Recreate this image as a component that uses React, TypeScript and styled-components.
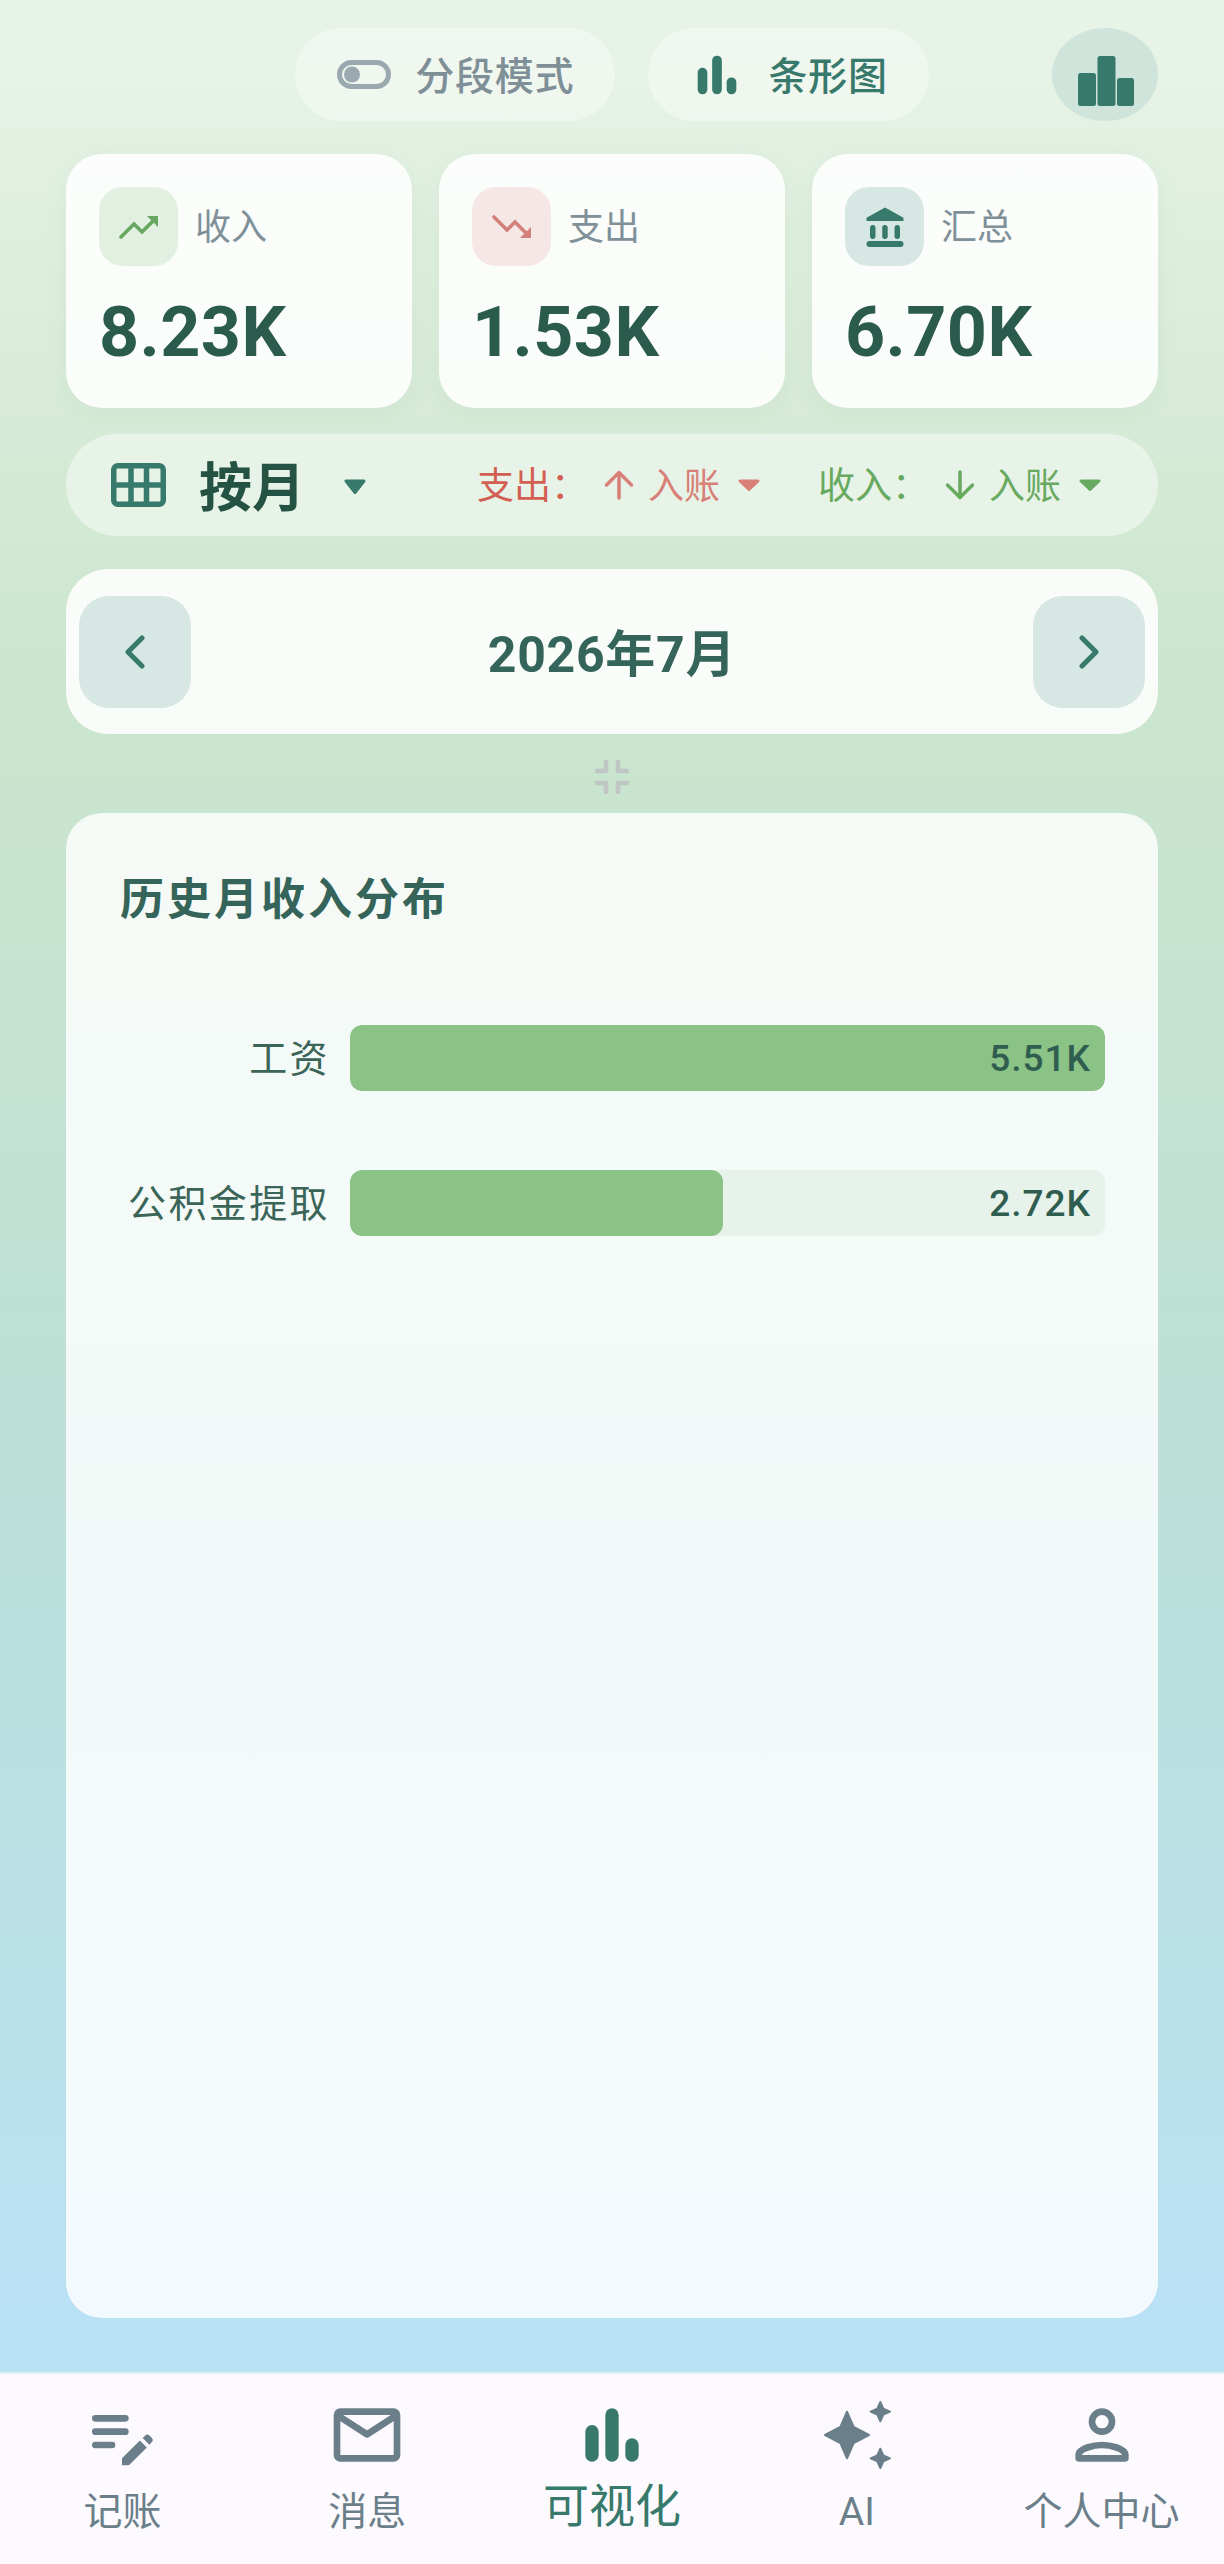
import React from 'react';
import styled, { createGlobalStyle } from 'styled-components';

const Global = createGlobalStyle`
  html, body { margin: 0; padding: 0; }
  body { font-family: Roboto, "Noto Sans CJK SC", sans-serif; }
  * { box-sizing: border-box; }
`;

const teal = '#37796b';
const slate = '#6b7f8a';

const Page = styled.div`
  width: 1224px;
  height: 2564px;
  display: flex;
  flex-direction: column;
  overflow: hidden;
  font-family: Roboto, "Noto Sans CJK SC", sans-serif;
`;
const Body = styled.main`
  flex: 1;
  min-height: 0;
  display: flex;
  flex-direction: column;
  padding: 28px 66px 54px;
  background: linear-gradient(180deg, #e9f4e9 0%, #cce6cd 28%, #bcdfd6 60%, #b9e1f6 100%);
`;
const TopBar = styled.div`
  display: grid;
  grid-template-columns: 1fr auto 1fr;
  align-items: center;
  margin-bottom: 33px;
`;
const PillGroup = styled.div`
  grid-column: 2;
  display: flex;
  gap: 33px;
`;
const Pill = styled.div<{ $gap: number; $left: number; $right: number }>`
  height: 93px;
  display: flex;
  align-items: center;
  gap: ${p => p.$gap}px;
  padding: 0 ${p => p.$right}px 0 ${p => p.$left}px;
  border-radius: 47px;
  background: rgba(255, 255, 255, 0.38);
`;
const PillLabel = styled.span<{ $color: string }>`
  font-size: 39px;
  font-weight: 500;
  letter-spacing: 0.8px;
  padding-bottom: 4px;
  color: ${p => p.$color};
  white-space: nowrap;
`;
const RoundButton = styled.div`
  grid-column: 3;
  justify-self: end;
  width: 106px;
  height: 93px;
  border-radius: 50%;
  display: flex;
  align-items: center;
  justify-content: center;
  padding: 13px 0 0 2px;
  background: #cfe4da;
`;
const Cards = styled.div`
  display: grid;
  grid-template-columns: repeat(3, 1fr);
  gap: 27px;
  margin-bottom: 26px;
`;
const StatCard = styled.div`
  height: 254px;
  padding: 33px;
  border-radius: 36px;
  background: rgba(255, 255, 255, 0.87);
  box-shadow: 0 4px 24px rgba(80, 140, 100, 0.07);
`;
const StatHead = styled.div`
  display: flex;
  align-items: center;
  gap: 17px;
  margin-bottom: 24px;
`;
const Tile = styled.div<{ $bg: string }>`
  width: 79px;
  height: 79px;
  border-radius: 24px;
  display: flex;
  align-items: center;
  justify-content: center;
  background: ${p => p.$bg};
`;
const StatLabel = styled.span`
  font-size: 36px;
  padding-bottom: 6px;
  color: #7f9098;
`;
const StatValue = styled.div`
  font-size: 70px;
  line-height: 84px;
  font-weight: 700;
  letter-spacing: 0.4px;
  color: #2a5b4d;
`;
const FilterBar = styled.div`
  height: 102px;
  display: flex;
  align-items: center;
  padding: 0 0 0 45px;
  border-radius: 51px;
  background: rgba(255, 255, 255, 0.45);
  margin-bottom: 33px;
`;
const ModeLabel = styled.span`
  flex: none;
  font-size: 53px;
  font-weight: 700;
  color: #245243;
  margin-left: 33px;
  padding-bottom: 2px;
  white-space: nowrap;
`;
const CaretBox = styled.span<{ $left: number; $top?: number }>`
  display: inline-flex;
  margin-left: ${p => p.$left}px;
  margin-top: ${p => p.$top ?? 0}px;
`;
const FilterGroup = styled.div<{ $left: number; $color: string }>`
  flex: none;
  display: flex;
  align-items: center;
  margin-left: ${p => p.$left}px;
  color: ${p => p.$color};
`;
const FilterName = styled.span`
  font-size: 37px;
  padding-bottom: 4px;
  white-space: nowrap;
`;
const FilterValue = styled.span<{ $color: string }>`
  font-size: 36px;
  color: ${p => p.$color};
  margin-left: 14px;
  padding-bottom: 5px;
  white-space: nowrap;
`;
const ArrowBox = styled.span`
  display: inline-flex;
  margin-left: 16px;
`;
const DateCard = styled.div`
  height: 165px;
  padding: 27px 13px;
  display: flex;
  align-items: center;
  justify-content: space-between;
  border-radius: 42px;
  background: rgba(255, 255, 255, 0.87);
  margin-bottom: 26px;
`;
const DateButton = styled.div`
  width: 112px;
  height: 112px;
  border-radius: 30px;
  display: flex;
  align-items: center;
  justify-content: center;
  background: #d7e7e3;
`;
const DateText = styled.span`
  font-size: 50px;
  font-weight: 700;
  letter-spacing: 0.7px;
  padding-bottom: 4px;
  color: #35655a;
`;
const Collapse = styled.div`
  height: 34px;
  display: flex;
  justify-content: center;
  margin-bottom: 19px;
`;
const ChartCard = styled.section`
  flex: 1;
  padding: 57px 53px 0 54px;
  border-radius: 36px;
  background: rgba(255, 255, 255, 0.82);
`;
const ChartTitle = styled.h2`
  margin: 0 0 95px;
  font-size: 44px;
  line-height: 60px;
  font-weight: 700;
  letter-spacing: 3px;
  color: #35655a;
`;
const BarRows = styled.div`
  display: flex;
  flex-direction: column;
  gap: 79px;
`;
const BarRow = styled.div`
  display: grid;
  grid-template-columns: 208px 1fr;
  column-gap: 22px;
  align-items: center;
`;
const BarLabel = styled.span`
  font-size: 38px;
  letter-spacing: 2.4px;
  text-align: right;
  margin-right: -2px;
  padding-bottom: 6px;
  color: #3a6558;
`;
const BarTrack = styled.div`
  position: relative;
  height: 66px;
  border-radius: 12px;
  overflow: hidden;
  display: flex;
  align-items: center;
  justify-content: flex-end;
  padding-right: 14px;
  background: #e7f2ea;
`;
const BarFill = styled.div`
  position: absolute;
  left: 0;
  top: 0;
  bottom: 0;
  border-radius: 12px;
  background: #8bc285;
`;
const BarValue = styled.span`
  position: relative;
  font-size: 37px;
  font-weight: 500;
  letter-spacing: 1px;
  color: #2f5e50;
`;
const BottomNav = styled.nav`
  height: 192px;
  flex: none;
  display: grid;
  grid-template-columns: repeat(5, 1fr);
  background: #fdfaff;
  border-top: 2px solid #e3eff5;
`;
const Tab = styled.div<{ $active?: boolean }>`
  display: flex;
  flex-direction: column;
  align-items: center;
  padding-top: 21px;
  color: ${p => (p.$active ? teal : slate)};
`;
const TabLabel = styled.span<{ $active?: boolean }>`
  font-size: ${p => (p.$active ? 46 : 39)}px;
  line-height: ${p => (p.$active ? 54 : 50)}px;
  margin-top: ${p => (p.$active ? 4 : 12)}px;
  white-space: nowrap;
`;

const Caret = ({ color, h = 12 }: { color: string; h?: number }) => (
  <svg width="22" height={h} viewBox={`0 0 22 ${h}`}>
    <path d={`M2 2h18L11 ${h - 1.5}z`} fill={color} stroke={color} strokeWidth="3" strokeLinejoin="round" />
  </svg>
);
const BarsRounded = ({ size, color }: { size: number; color: string }) => (
  <svg width={size} height={size} viewBox="0 0 24 24" fill={color}>
    <rect x="4" y="9" width="4" height="11" rx="2" />
    <rect x="10" y="4" width="4" height="16" rx="2" />
    <rect x="16" y="13" width="4" height="7" rx="2" />
  </svg>
);
const BarsSquare = () => (
  <svg width="56" height="50" viewBox="0 0 56 50" fill={teal}>
    <rect x="0" y="17" width="18" height="33" rx="2.5" />
    <rect x="19.5" y="0" width="18" height="50" rx="2.5" />
    <rect x="39" y="22" width="17" height="28" rx="2.5" />
  </svg>
);
const ToggleIcon = () => (
  <svg width="54" height="29" viewBox="0 0 54 29">
    <rect x="2.5" y="2.5" width="49" height="24" rx="12" fill="none" stroke="#9aa8b0" strokeWidth="5" />
    <circle cx="15" cy="14.5" r="8" fill="#9aa8b0" />
  </svg>
);
const TrendUp = () => (
  <svg width="40" height="26" viewBox="0 0 40 26" fill="none" stroke="#66a85f" strokeWidth="3.6" strokeLinecap="round">
    <path d="M2 23L15 10l8 8L34 7" />
    <path d="M28 2h11v11z" fill="#66a85f" stroke="none" />
  </svg>
);
const TrendDown = () => (
  <svg width="40" height="26" viewBox="0 0 40 26" fill="none" stroke="#d4807a" strokeWidth="3.6" strokeLinecap="round">
    <path d="M2 3L15 16l8-8L34 19" />
    <path d="M28 24h11V13z" fill="#d4807a" stroke="none" />
  </svg>
);
const Bank = () => (
  <svg width="38" height="40" viewBox="0 0 38 40" fill={teal}>
    <path d="M19 0.5L37 10.5a1 1 0 0 1 0.5 1V14H0.5v-2.5a1 1 0 0 1 .5-1z" />
    <rect x="4" y="18" width="5.5" height="14" rx="2.7" />
    <rect x="16.2" y="18" width="5.5" height="14" rx="2.7" />
    <rect x="28.5" y="18" width="5.5" height="14" rx="2.7" />
    <rect x="0.5" y="34" width="37" height="6" rx="3" />
  </svg>
);
const GridIcon = () => (
  <svg width="55" height="44" viewBox="0 0 55 44" fill="none" stroke={teal} strokeWidth="5.5">
    <rect x="2.75" y="2.75" width="49.5" height="38.5" rx="4" />
    <path d="M20 2v40M35.5 2v40M2 22h51" />
  </svg>
);
const ArrowV = ({ color, down }: { color: string; down?: boolean }) => (
  <svg width="30" height="30" viewBox="0 0 30 30" fill="none" stroke={color} strokeWidth="3.5" strokeLinecap="round" strokeLinejoin="round">
    {down ? <path d="M15 2v25M2.5 15L15 27.5 27.5 15" /> : <path d="M15 28V3M2.5 15L15 2.5 27.5 15" />}
  </svg>
);
const Chevron = ({ right }: { right?: boolean }) => (
  <svg width="22" height="34" viewBox="0 0 22 34" fill="none" stroke={teal} strokeWidth="5" strokeLinecap="round" strokeLinejoin="round">
    {right ? <path d="M4 3l14 14L4 31" /> : <path d="M18 3L4 17l14 14" />}
  </svg>
);
const CollapseIcon = () => (
  <svg width="34" height="34" viewBox="0 0 34 34" fill="none" stroke="#bfc6c3" strokeWidth="4.6" strokeLinecap="round" strokeLinejoin="round">
    <path d="M2 11h9V2M32 11h-9V2M2 23h9v9M32 23h-9v9" />
  </svg>
);
const NoteIcon = () => (
  <svg width="80" height="80" viewBox="0 0 24 24" fill={slate}>
    <rect x="3" y="6" width="11" height="2" rx="1" />
    <rect x="3" y="10" width="11" height="2" rx="1" />
    <rect x="3" y="14" width="7" height="2" rx="1" />
    <path d="M12 21v-1.8c0-.13.05-.26.15-.35l5.2-5.2 2.1 2.1-5.2 5.2c-.1.1-.22.15-.35.15h-1.4a.5.5 0 0 1-.5-.1z" />
    <path d="M18.2 12.9l.7-.7a1 1 0 0 1 1.4 0l.6.6a1 1 0 0 1 0 1.4l-.7.7z" />
  </svg>
);
const MailIcon = () => (
  <svg width="80" height="80" viewBox="0 0 24 24" fill="none" stroke={slate} strokeWidth="2" strokeLinejoin="round">
    <rect x="3" y="5" width="18" height="14" rx="1" />
    <path d="M3.3 6.2L12 11.8l8.7-5.6" />
  </svg>
);
const SparkIcon = () => (
  <svg width="80" height="80" viewBox="0 0 24 24" fill={slate} stroke={slate} strokeWidth="0.6" strokeLinejoin="round">
    <path d="M19 7.9l-.9-2-2-.9 2-.9.9-2 .9 2 2 .9-2 .9z" />
    <path d="M19 21.9l-.9-2-2-.9 2-.9.9-2 .9 2 2 .9-2 .9z" />
    <path d="M11 9.6L9 5 7 9.6 2.4 12 7 14.4 9 19l2-4.6 4.6-2.4z" />
  </svg>
);
const PersonIcon = () => (
  <svg width="80" height="80" viewBox="0 0 24 24" fill="none" stroke={slate} strokeWidth="2" strokeLinejoin="round">
    <circle cx="12" cy="8" r="3" />
    <path d="M5 19v-1c0-2 4.7-3 7-3s7 1 7 3v1z" />
  </svg>
);

const stats = [
  { label: '收入', value: '8.23K', bg: '#e2f0e1', icon: <TrendUp /> },
  { label: '支出', value: '1.53K', bg: '#f5e7e6', icon: <TrendDown /> },
  { label: '汇总', value: '6.70K', bg: '#d7e8e4', icon: <Bank /> },
];
const filters = [
  { name: '支出：', color: '#d35f52', soft: '#d87f78', left: 111, down: false },
  { name: '收入：', color: '#68a960', soft: '#68a960', left: 58, down: true },
];
const bars = [
  { label: '工资', value: '5.51K', pct: 100 },
  { label: '公积金提取', value: '2.72K', pct: 49.4 },
];
const tabs = [
  { label: '记账', icon: <NoteIcon /> },
  { label: '消息', icon: <MailIcon /> },
  { label: '可视化', icon: <BarsRounded size={80} color={teal} />, active: true },
  { label: 'AI', icon: <SparkIcon /> },
  { label: '个人中心', icon: <PersonIcon /> },
];

export default function App() {
  return (
    <Page>
      <Global />
      <Body>
        <TopBar>
          <PillGroup>
            <Pill $gap={24} $left={42} $right={41}>
              <ToggleIcon />
              <PillLabel $color="#7e8f97">分段模式</PillLabel>
            </Pill>
            <Pill $gap={22} $left={40} $right={41}>
              <BarsRounded size={58} color={teal} />
              <PillLabel $color={teal}>条形图</PillLabel>
            </Pill>
          </PillGroup>
          <RoundButton><BarsSquare /></RoundButton>
        </TopBar>
        <Cards>
          {stats.map(s => (
            <StatCard key={s.label}>
              <StatHead>
                <Tile $bg={s.bg}>{s.icon}</Tile>
                <StatLabel>{s.label}</StatLabel>
              </StatHead>
              <StatValue>{s.value}</StatValue>
            </StatCard>
          ))}
        </Cards>
        <FilterBar>
          <GridIcon />
          <ModeLabel>按月</ModeLabel>
          <CaretBox $left={39} $top={2}><Caret color={teal} h={15} /></CaretBox>
          {filters.map(f => (
            <FilterGroup key={f.name} $left={f.left} $color={f.color}>
              <FilterName>{f.name}</FilterName>
              <ArrowBox><ArrowV color={f.soft} down={f.down} /></ArrowBox>
              <FilterValue $color={f.soft}>入账</FilterValue>
              <CaretBox $left={18}><Caret color={f.soft} /></CaretBox>
            </FilterGroup>
          ))}
        </FilterBar>
        <DateCard>
          <DateButton><Chevron /></DateButton>
          <DateText>2026年7月</DateText>
          <DateButton><Chevron right /></DateButton>
        </DateCard>
        <Collapse><CollapseIcon /></Collapse>
        <ChartCard>
          <ChartTitle>历史月收入分布</ChartTitle>
          <BarRows>
            {bars.map(b => (
              <BarRow key={b.label}>
                <BarLabel>{b.label}</BarLabel>
                <BarTrack>
                  <BarFill style={{ width: `${b.pct}%` }} />
                  <BarValue>{b.value}</BarValue>
                </BarTrack>
              </BarRow>
            ))}
          </BarRows>
        </ChartCard>
      </Body>
      <BottomNav>
        {tabs.map(t => (
          <Tab key={t.label} $active={t.active}>
            {t.icon}
            <TabLabel $active={t.active}>{t.label}</TabLabel>
          </Tab>
        ))}
      </BottomNav>
    </Page>
  );
}
